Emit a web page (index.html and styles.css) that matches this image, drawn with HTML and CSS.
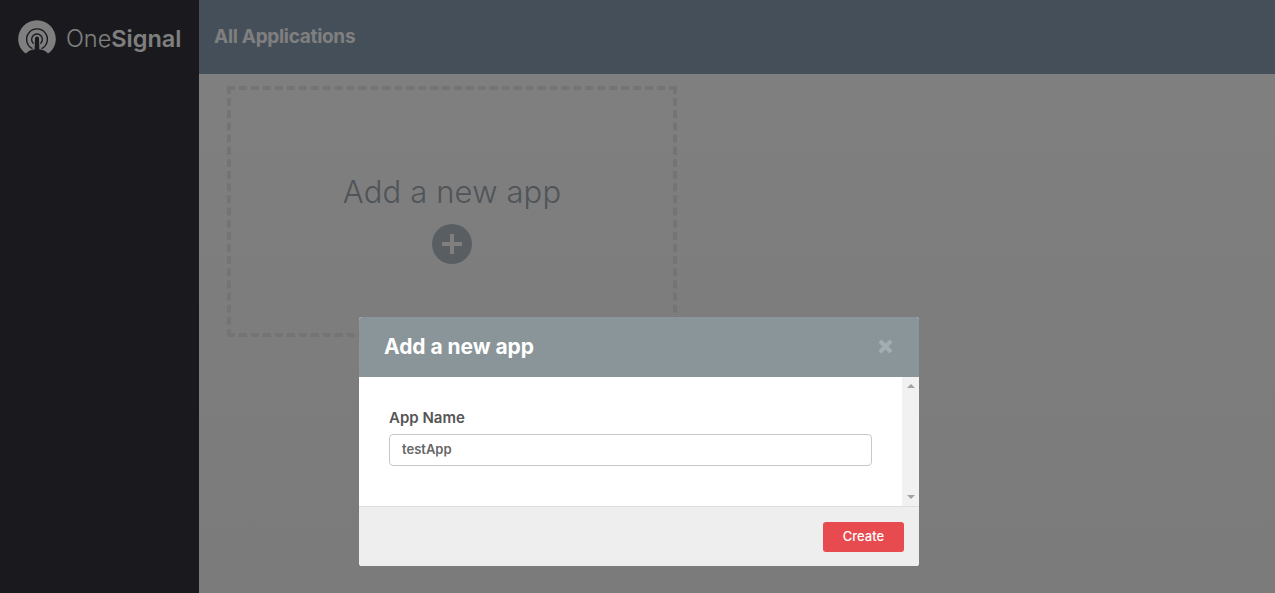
FILE: index.html
```html
<!DOCTYPE html>
<html lang="en">
<head>
<meta charset="utf-8">
<title>OneSignal - All Applications</title>
<link rel="stylesheet" href="styles.css">
</head>
<body>
<div class="app">
  <aside class="sidebar">
    <div class="logo">
      <svg class="logo-mark" width="38" height="34" viewBox="0 0 38 34" aria-hidden="true">
        <path class="mark-fill" d="M8 33.5 C3 30.2 0.2 25 0.2 19 C0.2 8.6 8.6 0.2 19 0.2 C29.4 0.2 37.8 8.6 37.8 19 C37.8 25 35 30.2 30 33.5 C28 31.5 25.5 30 22.5 29.6 L15.5 29.6 C12.5 30 10 31.5 8 33.5 Z"/>
        <g class="mark-rings">
          <path d="M14.5 28.7 A10.4 10.4 0 1 1 23.5 28.7"/>
          <path d="M15.6 23.6 A5.4 5.4 0 1 1 22.4 23.6"/>
        </g>
        <path class="mark-stem" d="M17 18.5 a2 2 0 0 1 4 0 L21.4 30 h-4.8 z"/>
      </svg>
      <span class="logo-text">One<b>Signal</b></span>
    </div>
  </aside>
  <div class="main">
    <header class="topbar"><h1>All Applications</h1></header>
    <section class="content">
      <div class="new-card">
        <div class="new-title">Add a new app</div>
        <div class="plus">
          <svg width="22" height="22" viewBox="0 0 22 22" aria-hidden="true"><path d="M9 1h4v8h8v4h-8v8H9v-8H1V9h8z"/></svg>
        </div>
      </div>
    </section>
  </div>
</div>
<div class="overlay">
  <div class="modal">
    <div class="modal-head">
      <h2>Add a new app</h2>
      <svg class="close" width="15" height="15" viewBox="0 0 15 15" aria-hidden="true"><path d="M2 2l11 11M13 2L2 13"/></svg>
    </div>
    <div class="modal-body">
      <div class="form">
        <label class="label" for="app-name">App Name</label>
        <input class="input" id="app-name" type="text" value="testApp">
      </div>
      <div class="scrollbar">
        <span class="arrow-up"></span>
        <span class="arrow-down"></span>
      </div>
    </div>
    <div class="modal-foot"><button class="create" type="button">Create</button></div>
  </div>
</div>
</body>
</html>
```
FILE: styles.css
```css
* { box-sizing: border-box; }
html, body { margin: 0; height: 100%; overflow: hidden; }
body { font-family: Inter, Lato, sans-serif; color: #555; }
.app { display: flex; height: 593px; }
.sidebar { width: 199px; flex: none; background: #34343d; }
.logo { display: flex; align-items: center; height: 74px; padding-left: 18px; gap: 10px; }
.logo-mark { flex: none; margin-top: -1px; }
.mark-fill { fill: #fff; }
.mark-rings path { fill: none; stroke: #34343d; stroke-width: 1.4; }
.mark-stem { fill: #34343d; }
.logo-text { font-size: 23.5px; font-weight: 300; color: #fff; margin-top: 2px; }
.logo-text b { font-weight: 600; }
.main { flex: 1; display: flex; flex-direction: column; }
.topbar { height: 74px; background: #8a9eb2; display: flex; align-items: center; padding: 0 15px; }
.topbar h1 { margin: -2px 0 0; font-size: 19px; font-weight: 700; color: #fff; letter-spacing: -.3px; }
.content { flex: 1; padding: 12px 28px; background: linear-gradient(#ffffff, #f6f6f6); }
.new-card { width: 450px; height: 251px; border: 4px dashed #e6e8ea; display: flex; flex-direction: column; align-items: center; padding-top: 84px; }
.new-title { font-size: 31px; line-height: 36px; font-weight: 300; color: #a0a9b1; letter-spacing: .15px; }
.plus { width: 40px; height: 40px; margin-top: 14px; border-radius: 50%; background: #b0bcc4; display: flex; align-items: center; justify-content: center; }
.plus svg { fill: #fff; }
.overlay { position: fixed; inset: 0; background: rgba(0,0,0,.5); padding: 317px 0 0 359px; }
.modal { width: 560px; height: 249px; border-radius: 3px; overflow: hidden; background: #fff; display: flex; flex-direction: column; }
.modal-head { height: 60px; flex: none; background: #8a9599; display: flex; align-items: center; justify-content: space-between; padding: 0 26px 2px 25px; }
.modal-head h2 { margin: 0 0 -1px; font-size: 21px; font-weight: 700; color: #fff; letter-spacing: -.05px; }
.close { fill: none; stroke: #a3aeb2; stroke-width: 4; }
.modal-body { height: 129px; flex: none; display: flex; }
.form { flex: 1; padding: 31px 30px 0; }
.label { display: block; font-size: 15px; line-height: 20px; font-weight: 600; color: #555; margin-bottom: 6px; }
.input { display: block; width: 483px; height: 32px; border: 1px solid #c8c8c8; border-radius: 4px; padding: 0 12px 2px; font: 600 13px Inter, sans-serif; color: #666; background: #fff; outline: none; }
.scrollbar { width: 17px; flex: none; background: #f1f1f1; display: flex; flex-direction: column; justify-content: space-between; align-items: center; padding: 7px 0; }
.arrow-up, .arrow-down { width: 0; height: 0; border-left: 4px solid transparent; border-right: 4px solid transparent; }
.arrow-up { border-bottom: 4px solid #a3a3a3; }
.arrow-down { border-top: 4px solid #a3a3a3; }
.modal-foot { flex: 1; background: #eee; border-top: 1px solid #ddd; display: flex; justify-content: flex-end; align-items: flex-start; padding: 15px 15px 0 0; }
.create { width: 81px; height: 30px; border: 0; border-radius: 3px; background: #e84b4f; color: #fff; font: 500 13px Inter, sans-serif; padding: 0 0 2px; }
```
